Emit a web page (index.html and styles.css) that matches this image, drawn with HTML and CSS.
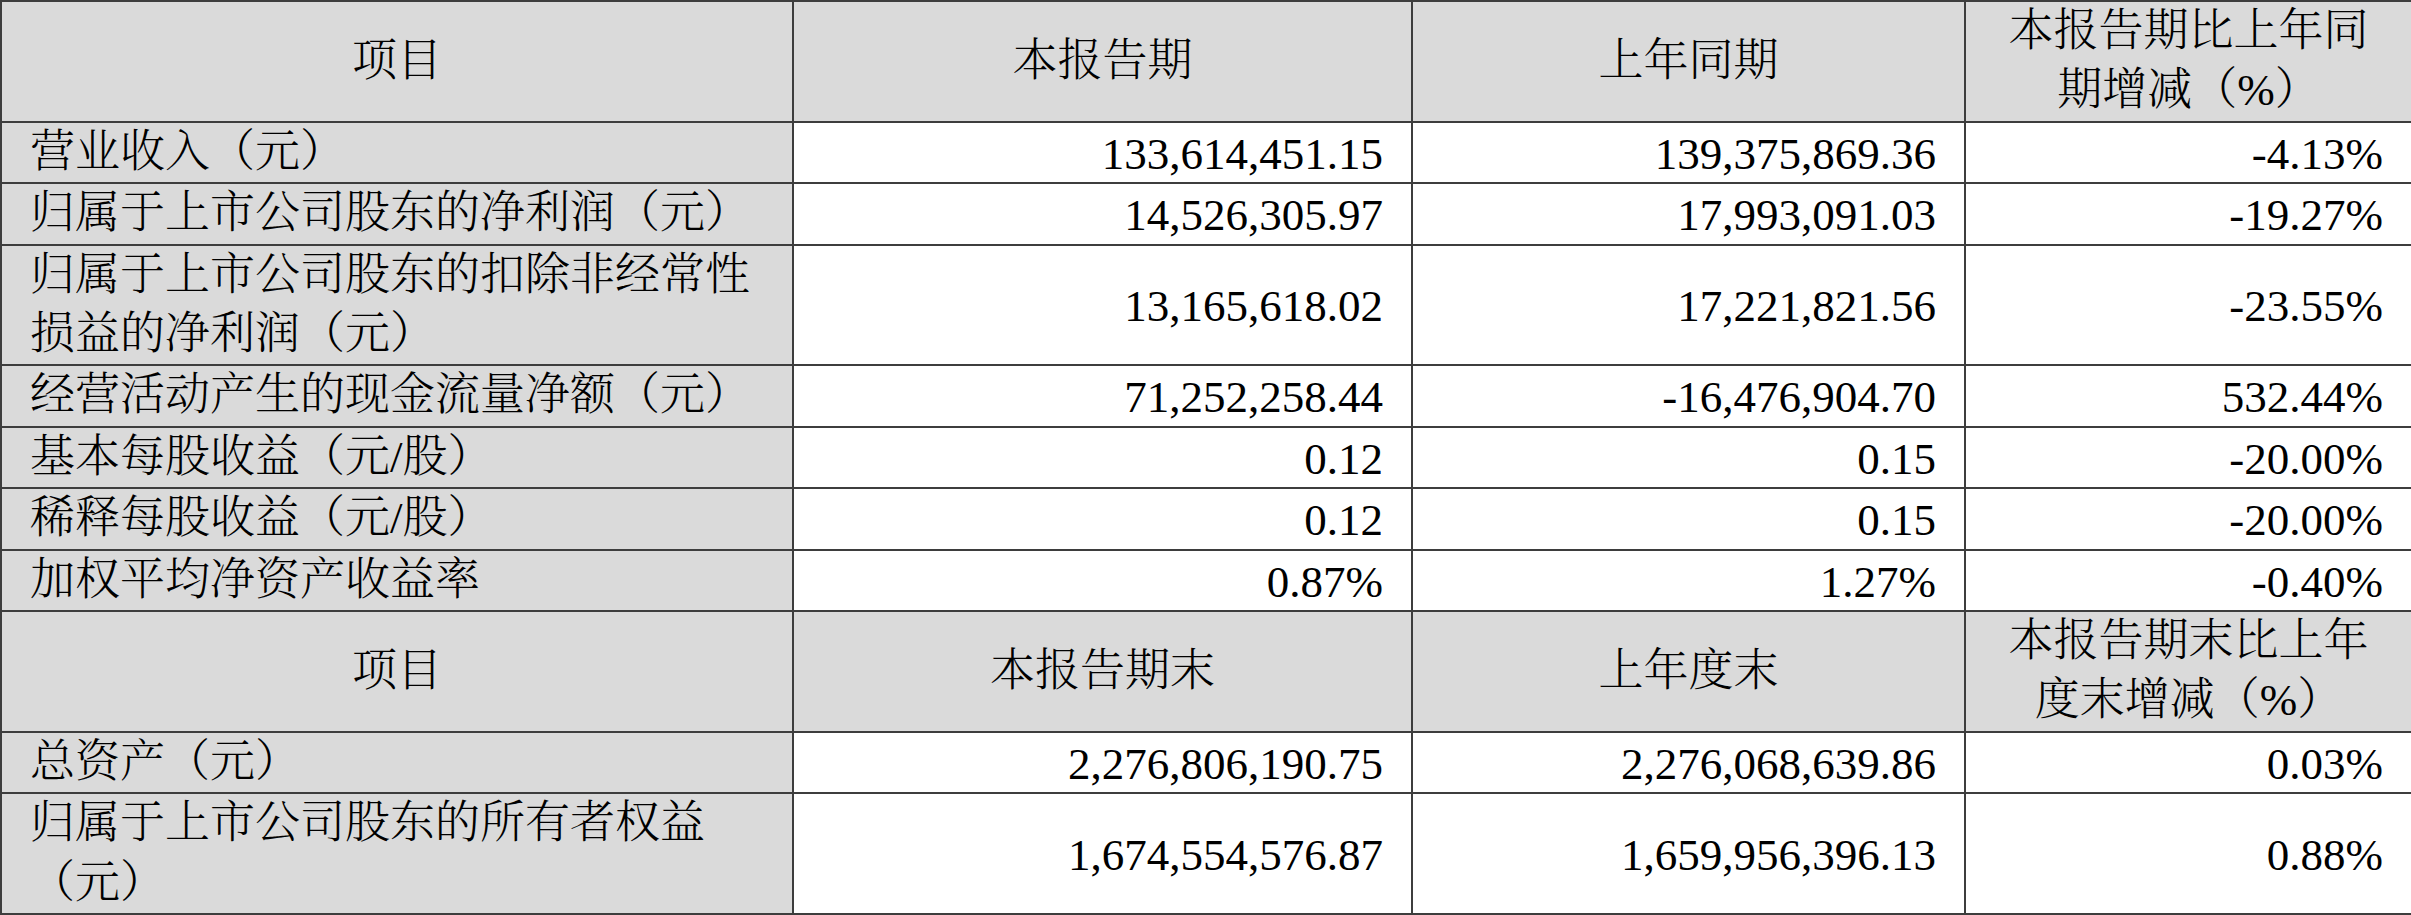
FILE: index.html
```html
<!DOCTYPE html>
<html lang="zh-CN">
<head>
<meta charset="utf-8">
<title>主要会计数据</title>
<link rel="stylesheet" href="styles.css">
</head>
<body>
<table class="fin">
  <colgroup>
    <col class="c1"><col class="c2"><col class="c3"><col class="c4">
  </colgroup>
  <tbody>
    <tr class="head">
      <td>项目</td><td>本报告期</td><td>上年同期</td><td>本报告期比上年同<br>期增减（%）</td>
    </tr>
    <tr><td class="label">营业收入（元）</td><td class="num">133,614,451.15</td><td class="num">139,375,869.36</td><td class="num">-4.13%</td></tr>
    <tr><td class="label">归属于上市公司股东的净利润（元）</td><td class="num">14,526,305.97</td><td class="num">17,993,091.03</td><td class="num">-19.27%</td></tr>
    <tr><td class="label">归属于上市公司股东的扣除非经常性<br>损益的净利润（元）</td><td class="num">13,165,618.02</td><td class="num">17,221,821.56</td><td class="num">-23.55%</td></tr>
    <tr><td class="label">经营活动产生的现金流量净额（元）</td><td class="num">71,252,258.44</td><td class="num">-16,476,904.70</td><td class="num">532.44%</td></tr>
    <tr><td class="label">基本每股收益（元/股）</td><td class="num">0.12</td><td class="num">0.15</td><td class="num">-20.00%</td></tr>
    <tr><td class="label">稀释每股收益（元/股）</td><td class="num">0.12</td><td class="num">0.15</td><td class="num">-20.00%</td></tr>
    <tr><td class="label">加权平均净资产收益率</td><td class="num">0.87%</td><td class="num">1.27%</td><td class="num">-0.40%</td></tr>
    <tr class="head">
      <td>项目</td><td>本报告期末</td><td>上年度末</td><td>本报告期末比上年<br>度末增减（%）</td>
    </tr>
    <tr><td class="label">总资产（元）</td><td class="num">2,276,806,190.75</td><td class="num">2,276,068,639.86</td><td class="num">0.03%</td></tr>
    <tr><td class="label">归属于上市公司股东的所有者权益<br>（元）</td><td class="num">1,674,554,576.87</td><td class="num">1,659,956,396.13</td><td class="num">0.88%</td></tr>
  </tbody>
</table>
</body>
</html>
```
FILE: styles.css
```css
html, body {
  margin: 0;
  padding: 0;
  background: #ffffff;
}

.fin {
  border-collapse: collapse;
  table-layout: fixed;
  width: 2411px;
  font-family: "Liberation Serif", "Noto Serif CJK SC", "Noto Sans CJK SC", serif;
  font-size: 45px;
  font-weight: 300;
  color: #000000;
}

.c1 { width: 792px; }
.c2 { width: 619px; }
.c3 { width: 553px; }
.c4 { width: 447px; }

.fin td {
  border: 2px solid #3d3d3d;
  line-height: 59.4px;
  padding: 0;
  vertical-align: middle;
  white-space: nowrap;
}

.head td {
  background: #dadada;
  text-align: center;
}

.fin td.label {
  background: #dadada;
  text-align: left;
  padding-left: 28px;
}

.fin td.num {
  background: #ffffff;
  text-align: right;
  padding-right: 28px;
  padding-top: 3px;
  line-height: 56.4px;
}
```
